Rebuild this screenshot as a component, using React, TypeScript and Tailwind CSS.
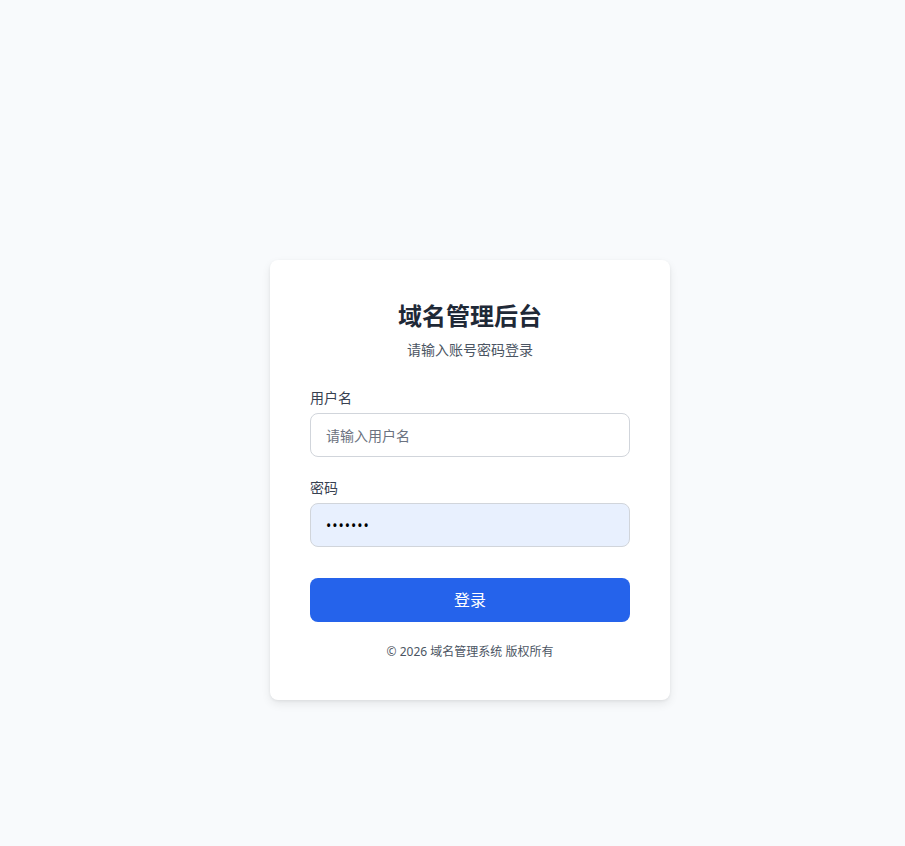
import React from "react";

export default function App() {
  return (
    <div
      className="min-h-[846px] w-full bg-[#f8fafc] flex justify-center pt-[260px] pl-[35px]"
      style={{ fontFamily: '"Noto Sans", "Noto Sans CJK SC", sans-serif' }}
    >
      <div className="w-[400px] h-fit bg-white rounded-lg shadow-[0_4px_10px_rgba(0,0,0,0.08),0_1px_3px_rgba(0,0,0,0.06)] p-10">
        <div className="text-center mb-7">
          <h1 className="text-2xl font-bold text-[#1f2937] leading-8">域名管理后台</h1>
          <p className="mt-2 text-sm text-[#4b5563] leading-5">请输入账号密码登录</p>
        </div>

        <label className="block text-sm text-[#374151] leading-5 mb-[5px]">用户名</label>
        <input
          type="text"
          placeholder="请输入用户名"
          className="block w-full h-11 px-[15px] rounded-lg border border-[#d1d5db] bg-white text-sm text-[#1f2937] placeholder:text-[#6b7280] outline-none"
        />

        <label className="block text-sm text-[#374151] leading-5 mt-[21px] mb-[5px]">密码</label>
        <input
          type="password"
          defaultValue="1234567"
          readOnly
          className="block w-full h-11 px-[15px] rounded-lg border border-[#d1d5db] bg-[#e8f0fe] text-sm text-black outline-none tracking-[1px]"
        />

        <button className="mt-[31px] w-full h-11 rounded-lg bg-[#2563eb] text-white text-base">
          登录
        </button>

        <p className="mt-[22px] text-center text-xs leading-4 text-[#4b5563]">© 2026 域名管理系统 版权所有</p>
      </div>
    </div>
  );
}
